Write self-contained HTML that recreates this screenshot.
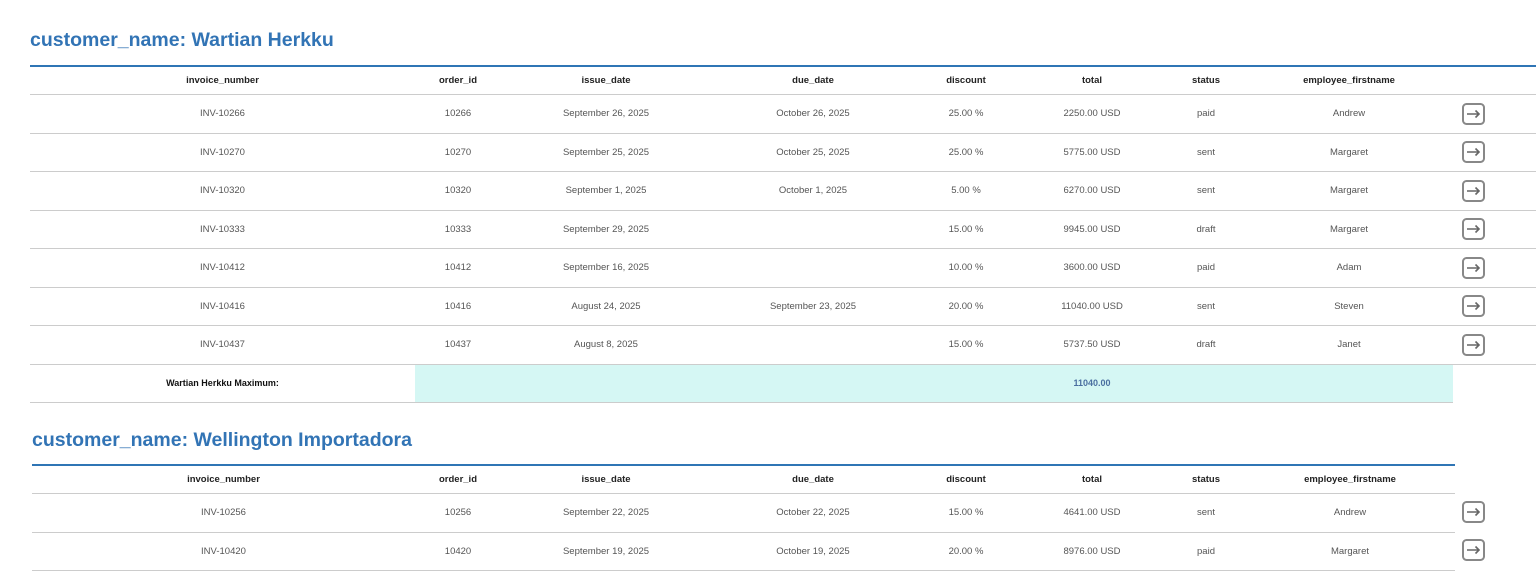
<!DOCTYPE html>
<html><head><style>
body{margin:0;background:#fff;font-family:"Liberation Sans",sans-serif;width:1536px;height:559px;overflow:hidden;position:relative}
h2{position:absolute;margin:0;font-size:19.5px;font-weight:bold;color:#3274b5;letter-spacing:0}
table{position:absolute;border-collapse:collapse;table-layout:fixed}
th{font-size:9.5px;font-weight:bold;color:#222;height:27px;border-bottom:1px solid #ccc;text-align:center;padding:0}
td{font-size:9.5px;color:#555;height:37.5px;border-bottom:1px solid #ccc;text-align:center;padding:0}
thead tr{border-top:2px solid #2f75b5}
.btn{display:inline-block;width:23px;height:22px;vertical-align:middle}
.cy{background:#d5f7f4}
.lab{font-weight:bold;color:#111;font-size:9px}
.val{font-weight:bold;color:#4a6fa0;font-size:9px}
</style></head><body>
<svg width="0" height="0" style="position:absolute"><symbol id="b" viewBox="0 0 23 22"><rect x="1" y="1" width="21" height="20" rx="3.5" fill="none" stroke="#888" stroke-width="2"/><path d="M5 11H17M13.5 7.5L17 11L13.5 14.5" fill="none" stroke="#666" stroke-width="1.6"/></symbol></svg>
<h2 style="left:30px;top:29px">customer_name: Wartian Herkku</h2>
<table style="left:30px;top:65px;width:1506px">
<colgroup><col style="width:385px"><col style="width:86px"><col style="width:210px"><col style="width:204px"><col style="width:102px"><col style="width:150px"><col style="width:78px"><col style="width:208px"><col style="width:83px"></colgroup>
<thead><tr><th>invoice_number</th><th>order_id</th><th>issue_date</th><th>due_date</th><th>discount</th><th>total</th><th>status</th><th>employee_firstname</th><th></th></tr></thead>
<tbody>
<tr><td>INV-10266</td><td>10266</td><td>September 26, 2025</td><td>October 26, 2025</td><td>25.00 %</td><td>2250.00 USD</td><td>paid</td><td>Andrew</td><td style="text-align:left;padding-left:9px"><svg class="btn"><use href="#b"/></svg></td></tr>
<tr><td>INV-10270</td><td>10270</td><td>September 25, 2025</td><td>October 25, 2025</td><td>25.00 %</td><td>5775.00 USD</td><td>sent</td><td>Margaret</td><td style="text-align:left;padding-left:9px"><svg class="btn"><use href="#b"/></svg></td></tr>
<tr><td>INV-10320</td><td>10320</td><td>September 1, 2025</td><td>October 1, 2025</td><td>5.00 %</td><td>6270.00 USD</td><td>sent</td><td>Margaret</td><td style="text-align:left;padding-left:9px"><svg class="btn"><use href="#b"/></svg></td></tr>
<tr><td>INV-10333</td><td>10333</td><td>September 29, 2025</td><td></td><td>15.00 %</td><td>9945.00 USD</td><td>draft</td><td>Margaret</td><td style="text-align:left;padding-left:9px"><svg class="btn"><use href="#b"/></svg></td></tr>
<tr><td>INV-10412</td><td>10412</td><td>September 16, 2025</td><td></td><td>10.00 %</td><td>3600.00 USD</td><td>paid</td><td>Adam</td><td style="text-align:left;padding-left:9px"><svg class="btn"><use href="#b"/></svg></td></tr>
<tr><td>INV-10416</td><td>10416</td><td>August 24, 2025</td><td>September 23, 2025</td><td>20.00 %</td><td>11040.00 USD</td><td>sent</td><td>Steven</td><td style="text-align:left;padding-left:9px"><svg class="btn"><use href="#b"/></svg></td></tr>
<tr><td>INV-10437</td><td>10437</td><td>August 8, 2025</td><td></td><td>15.00 %</td><td>5737.50 USD</td><td>draft</td><td>Janet</td><td style="text-align:left;padding-left:9px"><svg class="btn"><use href="#b"/></svg></td></tr>
<tr><td class="lab">Wartian Herkku Maximum:</td><td class="cy"></td><td class="cy"></td><td class="cy"></td><td class="cy"></td><td class="cy val">11040.00</td><td class="cy"></td><td class="cy"></td><td style="border-bottom:none"></td></tr>
</tbody></table>
<h2 style="left:32px;top:429px">customer_name: Wellington Importadora</h2>
<table style="left:32px;top:464px;width:1423px">
<colgroup><col style="width:383px"><col style="width:86px"><col style="width:210px"><col style="width:204px"><col style="width:102px"><col style="width:150px"><col style="width:78px"><col style="width:210px"></colgroup>
<thead><tr><th>invoice_number</th><th>order_id</th><th>issue_date</th><th>due_date</th><th>discount</th><th>total</th><th>status</th><th>employee_firstname</th></tr></thead>
<tbody>
<tr><td>INV-10256</td><td>10256</td><td>September 22, 2025</td><td>October 22, 2025</td><td>15.00 %</td><td>4641.00 USD</td><td>sent</td><td>Andrew</td></tr>
<tr><td>INV-10420</td><td>10420</td><td>September 19, 2025</td><td>October 19, 2025</td><td>20.00 %</td><td>8976.00 USD</td><td>paid</td><td>Margaret</td></tr>
</tbody></table>
<svg class="btn" style="position:absolute;left:1462px;top:501px"><use href="#b"/></svg>
<svg class="btn" style="position:absolute;left:1462px;top:539px"><use href="#b"/></svg>
</body></html>
